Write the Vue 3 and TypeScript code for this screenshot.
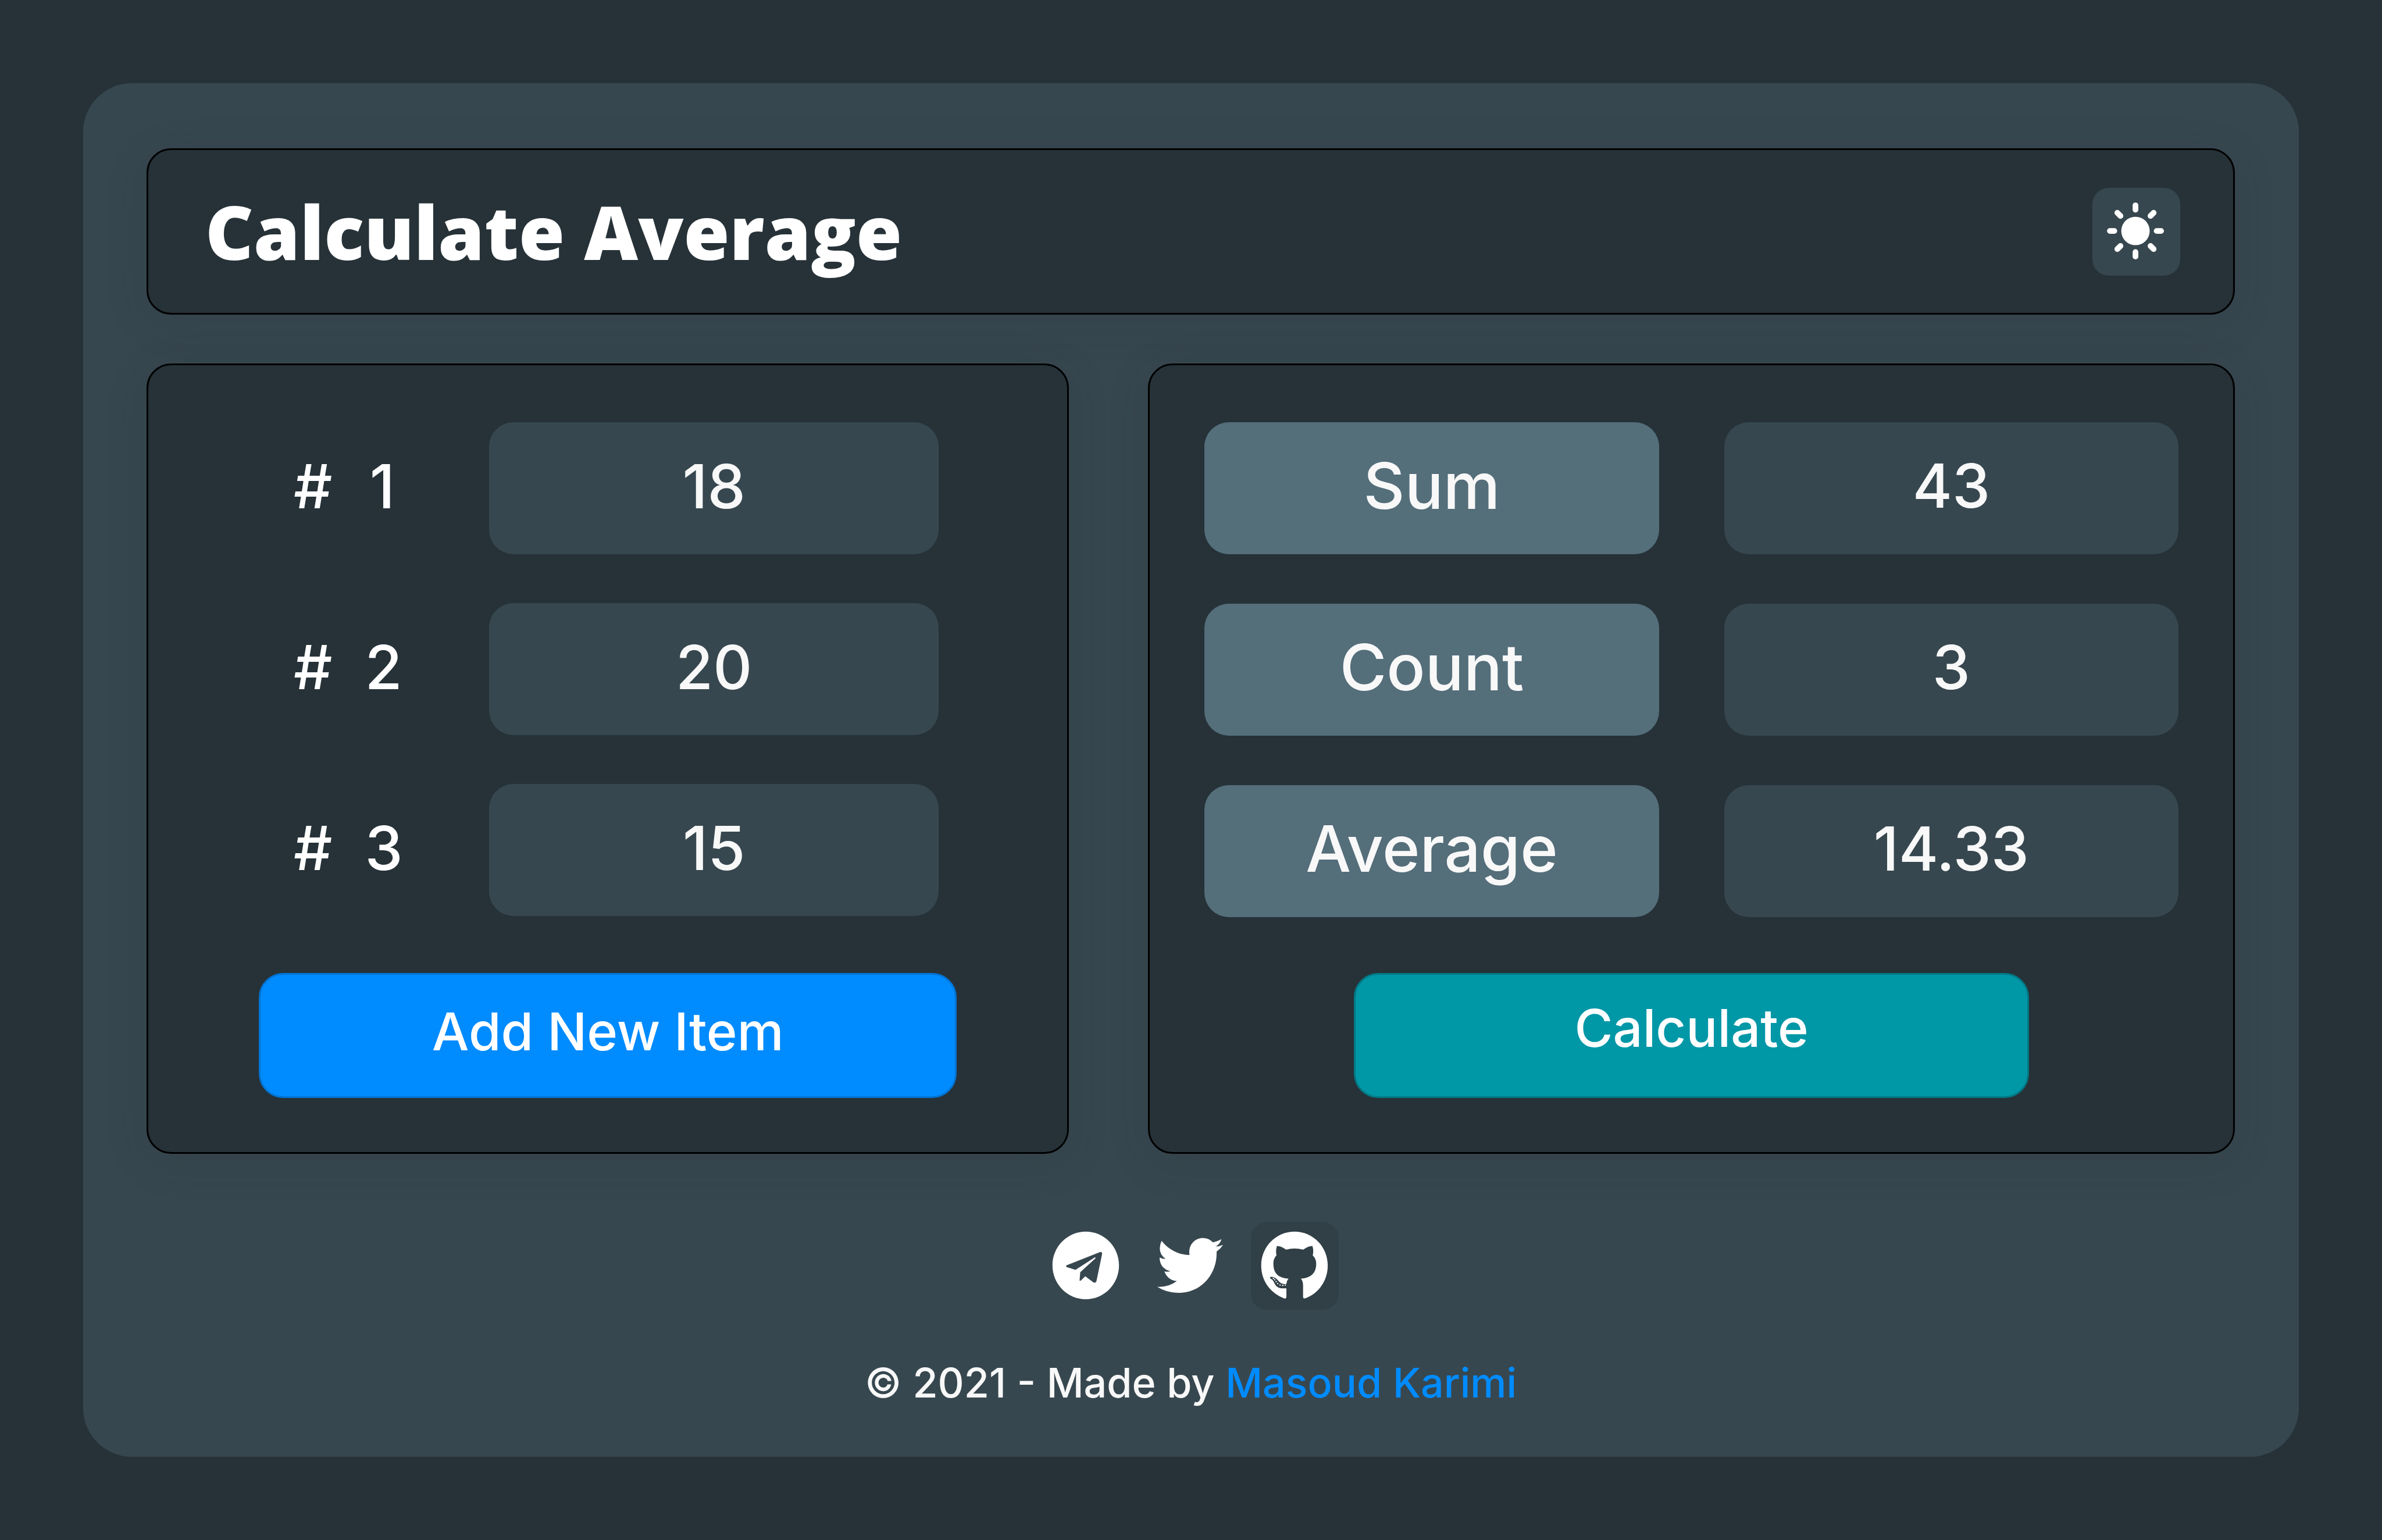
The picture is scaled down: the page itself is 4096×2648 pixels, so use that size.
<script setup lang="ts">
import { ref } from 'vue'

interface Entry {
  id: number
  value: string
}

const entries = ref<Entry[]>([
  { id: 1, value: '18' },
  { id: 2, value: '20' },
  { id: 3, value: '15' },
])

const results = ref([
  { key: 'sum', label: 'Sum', value: '43' },
  { key: 'count', label: 'Count', value: '3' },
  { key: 'average', label: 'Average', value: '14.33' },
])

const tailDots = [
  [127, 387], [137, 397], [147, 411], [159, 425], [176, 436], [196, 439], [215, 437],
]

function addItem(): void {
  entries.value.push({ id: entries.value.length + 1, value: '' })
}

function calculate(): void {
  const numbers = entries.value.filter((e) => e.value !== '').map((e) => Number(e.value))
  const sum = numbers.reduce((total, n) => total + n, 0)
  const average = numbers.length ? sum / numbers.length : 0
  results.value[0].value = String(sum)
  results.value[1].value = String(numbers.length)
  results.value[2].value = String(Math.round(average * 100) / 100)
}
</script>

<template>
  <div class="page">
    <main class="card">
      <header class="header">
        <h1 class="title">Calculate Average</h1>
        <button class="icon-box theme" type="button" aria-label="Toggle theme">
          <svg viewBox="108 120 648 648" aria-hidden="true">
            <circle cx="426" cy="438" r="105" fill="#fff" />
            <path
              d="M426 249V281M426 594V627M237 438H270M582 438H615M292 304L315 327M560 304L537 327M292 572L315 549M560 572L537 549"
              stroke="#fff" stroke-width="42" stroke-linecap="round" fill="none"
            />
          </svg>
        </button>
      </header>

      <div class="panels">
        <form class="panel" @submit.prevent="addItem">
          <div class="entries">
            <div v-for="entry in entries" :key="entry.id" class="entry">
              <label class="entry-label" :for="`entry-${entry.id}`">
                <span>#</span><span class="entry-number">{{ entry.id }}</span>
              </label>
              <input :id="`entry-${entry.id}`" v-model="entry.value" class="field number" type="text" inputmode="decimal">
            </div>
          </div>
          <button class="action add" type="submit">Add New Item</button>
        </form>

        <form class="panel" @submit.prevent="calculate">
          <div class="results">
            <template v-for="result in results" :key="result.key">
              <label class="field caption" :for="result.key">{{ result.label }}</label>
              <output :id="result.key" class="field number">{{ result.value }}</output>
            </template>
          </div>
          <button class="action calculate" type="submit">Calculate</button>
        </form>
      </div>

      <footer class="footer">
        <nav class="social" aria-label="Social links">
          <a class="icon-box" href="#telegram" aria-label="Telegram">
            <svg viewBox="-30 -30 648 648" aria-hidden="true">
              <path
                fill="#fff" fill-rule="evenodd"
                d="M288 42C424 42 533 153 533 291C533 429 424 541 288 541C152 541 42 429 42 291C42 153 152 42 288 42ZM148 290L392 193Q410 189 408 208L367 406Q361 425 344 416L284 371L252 402Q244 408 242 402L247 341L360 238Q362 231 353 233L212 324L148 304Q136 297 148 290Z"
              />
            </svg>
          </a>
          <a class="icon-box" href="#twitter" aria-label="Twitter">
            <svg viewBox="-42 -30 648 648" aria-hidden="true">
              <path
                fill="#fff"
                d="M67 109C120 175 190 212 273 215C262 140 312 89 372 89Q415 89 446 121Q480 115 509 98Q498 134 467 152Q495 150 521 139Q502 168 473 189C479 345 370 494 188 494Q105 494 34 449Q113 456 180 407Q112 400 88 336Q110 340 132 334Q55 315 52 233Q73 244 97 244Q30 195 67 109Z"
              />
            </svg>
          </a>
          <a class="icon-box active" href="#github" aria-label="GitHub">
            <svg viewBox="-39 -30 648 648" aria-hidden="true">
              <path
                fill="#fff"
                d="M205 534C105 495 37 405 37 292C37 153 147 42 283 42C419 42 528 153 528 292C528 405 460 500 362 534Q346 538 346 522V440Q346 405 330 389C400 384 443 352 443 278Q443 243 417 217Q426 185 415 148Q390 145 347 175Q283 157 221 175Q178 145 153 148Q142 185 150 217Q127 240 127 278C127 352 165 384 239 389Q226 402 223 428C160 438 168 377 110 376Q98 378 104 387C150 408 120 468 223 460V522Q223 539 205 534Z"
              />
              <circle v-for="[x, y] in tailDots" :key="x" :cx="x" :cy="y" r="5" fill="#fff" />
            </svg>
          </a>
        </nav>
        <p class="credit">© 2021 - Made by <a href="#author">Masoud Karimi</a></p>
      </footer>
    </main>
  </div>
</template>

<style>
body {
  margin: 0;
  background: #263238;
}
</style>

<style scoped>
.page {
  box-sizing: border-box;
  min-height: 100vh;
  padding: 143px;
  background: #263238;
  color: #fff;
  font-family: Inter, "Open Sans", sans-serif;
  font-weight: 500;
}

.page * {
  box-sizing: border-box;
}

.card {
  padding: 112px 110px 77px 109px;
  border-radius: 84px;
  background: #37474f;
}

.header,
.panel {
  border: 3px solid #000;
  border-radius: 42px;
  background: #263238;
  box-shadow: 0 14px 70px rgba(38, 50, 56, 0.15);
}

.header {
  display: flex;
  align-items: center;
  justify-content: space-between;
  height: 286px;
  padding: 0 91px 0 98px;
}

.title {
  margin: 0;
  font-family: "Open Sans", "Noto Sans", sans-serif;
  font-size: 128px;
  font-weight: 800;
  line-height: 176px;
}

.icon-box {
  display: block;
  width: 151px;
  height: 151px;
  padding: 0;
  border: 0;
  border-radius: 28px;
  background: none;
}

.icon-box svg {
  display: block;
  width: 100%;
  height: 100%;
}

.theme {
  background: #37474f;
  cursor: pointer;
}

.active {
  background: #313f46;
}

.panels {
  display: grid;
  grid-template-columns: 1586fr 1868fr;
  gap: 136px;
  margin-top: 84px;
}

.panel {
  display: flex;
  flex-direction: column;
  justify-content: space-between;
  padding: 98px 94px 93px;
}

.entries {
  display: flex;
  flex-direction: column;
  gap: 84px;
  margin-bottom: 98px;
  padding: 0 127px 0 156px;
}

.entry {
  display: grid;
  grid-template-columns: 336px 1fr;
}

.entry-label {
  display: flex;
  align-items: center;
  gap: 56px;
  padding-bottom: 8px;
  font-size: 104px;
}

.entry-number {
  width: 60px;
  text-align: center;
}

.results {
  display: grid;
  grid-template-columns: 1fr 1fr;
  gap: 85px 112px;
}

.field {
  display: block;
  width: 100%;
  min-width: 0;
  height: 227px;
  margin: 0;
  padding: 0 0 8px;
  border: 0;
  border-radius: 42px;
  background: #37474f;
  color: #f8f8f8;
  font-family: inherit;
  font-size: 110px;
  font-weight: inherit;
  line-height: 219px;
  text-align: center;
}

.number {
  font-size: 104px;
}

.caption {
  background: #546e7a;
}

.action {
  height: 215px;
  border: 3px solid;
  border-radius: 42px;
  color: #fff;
  font-family: inherit;
  font-size: 90px;
  font-weight: inherit;
  cursor: pointer;
}

.add {
  margin: 0 96px;
  padding: 0 0 14px;
  border-color: #0074d4;
  background: #008bff;
}

.calculate {
  margin: 0 257px;
  padding: 0 0 26px;
  border-color: #007985;
  background: #0097a7;
}

.social {
  display: flex;
  justify-content: center;
  gap: 28px;
  margin-top: 117px;
}

.credit {
  margin: 76px 0 0;
  color: #f8f8f8;
  font-size: 70px;
  line-height: 100px;
  text-align: center;
}

.credit a {
  color: #008bff;
  text-decoration: none;
}
</style>
